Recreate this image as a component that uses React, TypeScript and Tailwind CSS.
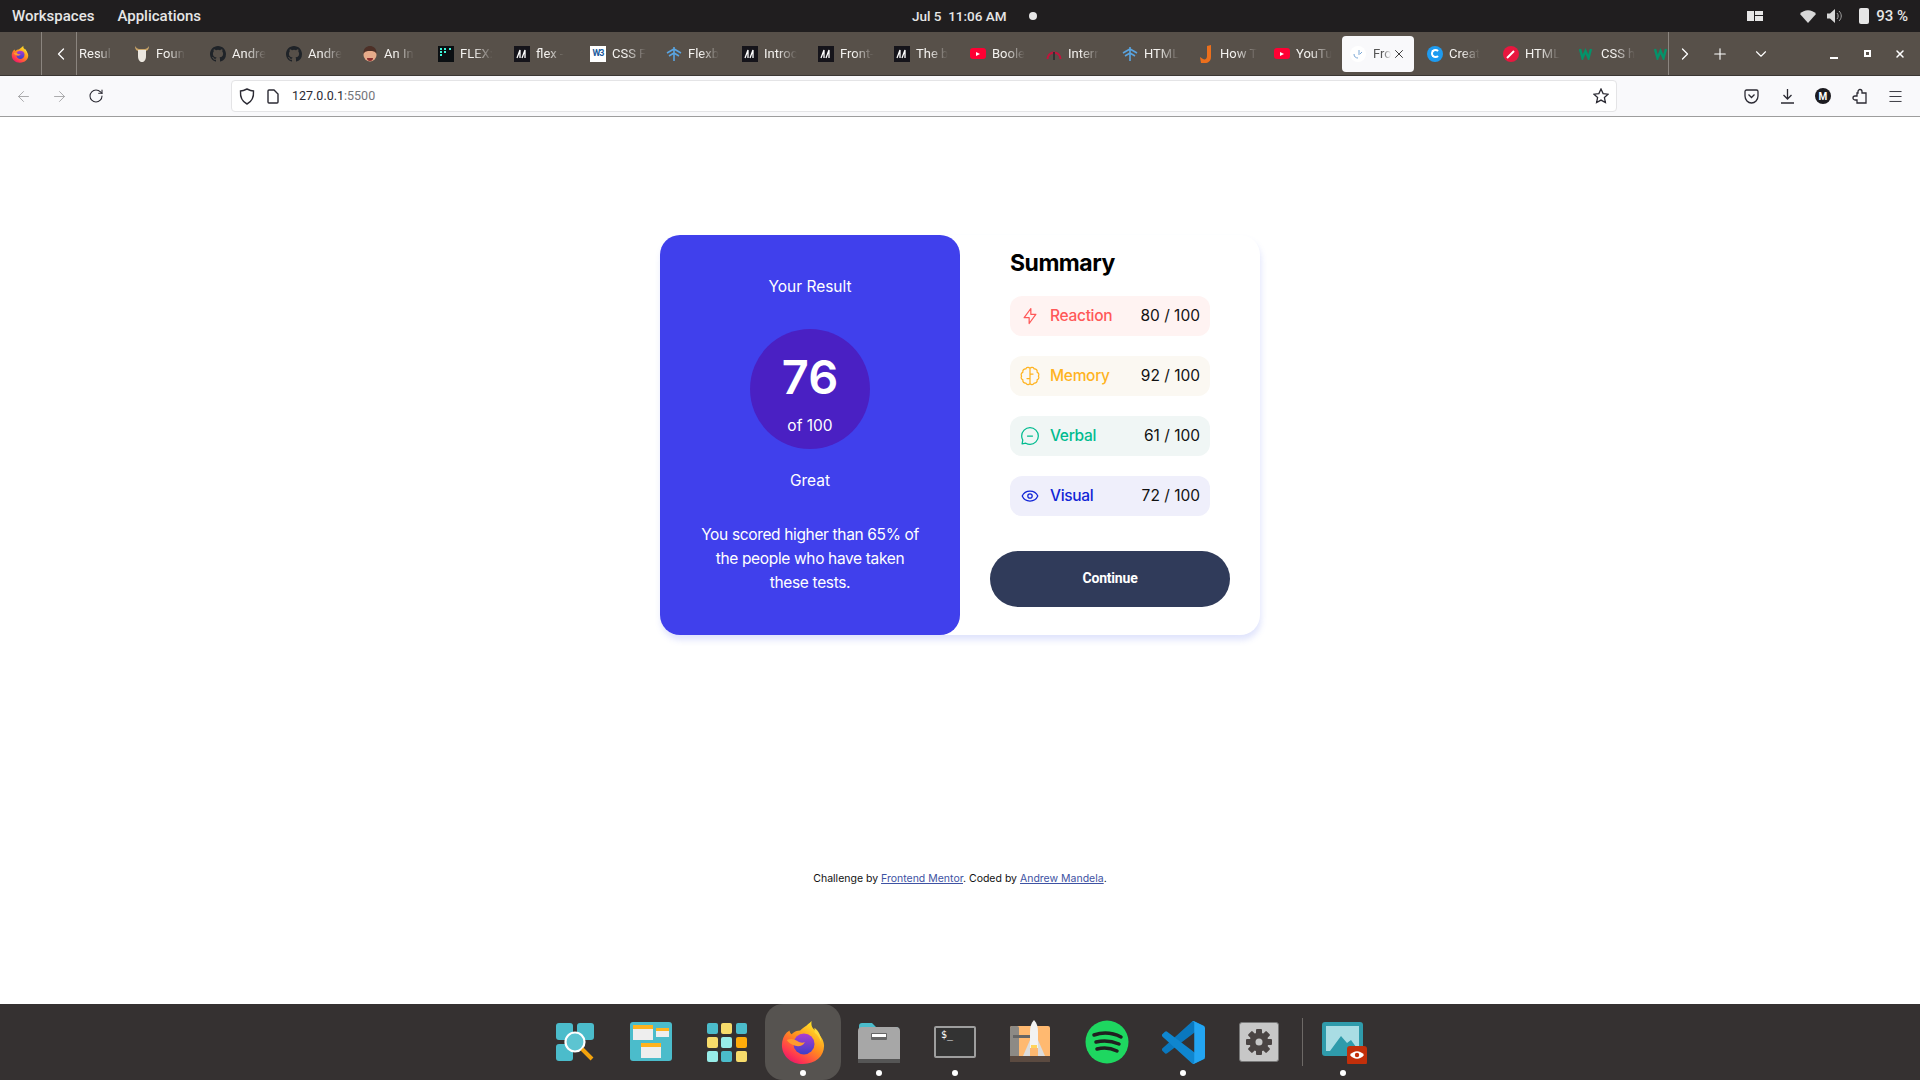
import React from "react";
import { ArrowLeft, ArrowRight, ChevronDown, ChevronLeft, ChevronRight, Menu, Plus, RotateCw, X } from "lucide-react";

function Firefox({ id, size }: { id: string; size: number }) {
  return (
    <svg width={size} height={size} viewBox="0 0 48 48">
      <defs>
        <linearGradient id={id + "a"} x1="0.8" y1="0.1" x2="0.2" y2="1">
          <stop offset="0" stopColor="#ffe226" />
          <stop offset="0.45" stopColor="#ff8a1f" />
          <stop offset="0.8" stopColor="#ff3750" />
          <stop offset="1" stopColor="#e3146f" />
        </linearGradient>
        <linearGradient id={id + "b"} x1="0.5" y1="0" x2="0.5" y2="1">
          <stop offset="0" stopColor="#b03cd0" />
          <stop offset="1" stopColor="#3b3fc8" />
        </linearGradient>
      </defs>
      <path d="M33 2c-1 5 1 8 5 11 4 4 8 9 8 15 0 11-9 19-22 19S2 38 2 27c0-5 2-10 5-13l3-2c0 2 1 3 2 4 3-3 6-4 9-4 3-3 7-5 12-10Z" fill={"url(#" + id + "a)"} />
      <circle cx="25" cy="26" r="11" fill={"url(#" + id + "b)"} />
      <path d="M7 22c4-2 8-1 11 1 3 2 6 2 8 1-2 4-6 5-10 4-4-1-7-3-9-6Z" fill="#ff9a2e" />
      <path d="M36 9c4 3 7 8 7 15-2-5-4-8-7-10Z" fill="#ffd93a" />
    </svg>
  );
}

function Mdn() {
  return (
    <span className="flex h-4 w-4 items-center justify-center bg-[#15141a]">
      <svg width="12" height="10" viewBox="0 0 12 10"><path d="M1 9 4 1v8M6 9l3-8v8" stroke="#fff" strokeWidth="1.3" fill="none" /></svg>
    </span>
  );
}

function Github() {
  return (
    <svg width="16" height="16" viewBox="0 0 16 16" fill="#1f2328">
      <path d="M8 0C3.58 0 0 3.58 0 8c0 3.54 2.29 6.53 5.47 7.59.4.07.55-.17.55-.38 0-.19-.01-.82-.01-1.49-2.01.37-2.53-.49-2.69-.94-.09-.23-.48-.94-.82-1.13-.28-.15-.68-.52-.01-.53.63-.01 1.08.58 1.23.82.72 1.21 1.87.87 2.33.66.07-.52.28-.87.51-1.07-1.78-.2-3.64-.89-3.64-3.95 0-.87.31-1.59.82-2.15-.08-.2-.36-1.02.08-2.12 0 0 .67-.21 2.2.82a7.4 7.4 0 0 1 4 0c1.53-1.04 2.2-.82 2.2-.82.44 1.1.16 1.92.08 2.12.51.56.82 1.27.82 2.15 0 3.07-1.87 3.75-3.65 3.95.29.25.54.73.54 1.48 0 1.07-.01 1.93-.01 2.2 0 .21.15.46.55.38A8 8 0 0 0 16 8c0-4.42-3.58-8-8-8Z" />
    </svg>
  );
}

function Flexbox() {
  return (
    <svg width="16" height="16" viewBox="0 0 16 16" stroke="#5aa4e0" strokeWidth="1.6" fill="none">
      <path d="M8 1v14M1 7l7-4 7 4M3 10l5-3 5 3" />
    </svg>
  );
}

function Youtube() {
  return (
    <span className="flex h-[11px] w-4 items-center justify-center rounded-[3px] bg-[#ff0033]">
      <span className="h-0 w-0 border-y-[2.5px] border-l-[4px] border-y-transparent border-l-white" />
    </span>
  );
}

function W3School() {
  return (
    <svg width="16" height="13" viewBox="0 0 16 13" fill="none" stroke="#04926a" strokeWidth="2.400">
      <path d="M1 2l2.500 9L6.500 4l3 7L12 2" />
    </svg>
  );
}

const favicons: Record<string, React.ReactNode> = {
  none: null,
  viking: (
    <svg width="16" height="18" viewBox="0 0 16 18">
      <path d="M1 1c0 4 2 5 4 5h6c2 0 4-1 4-5-1 2-3 3-4 3H5C4 4 2 3 1 1Z" fill="#c9a468" />
      <path d="M4 5h8v6c0 4-2 6-4 6s-4-2-4-6Z" fill="#ece7df" />
    </svg>
  ),
  github: <Github />,
  face: (
    <svg width="16" height="18" viewBox="0 0 16 18">
      <circle cx="8" cy="10" r="6.5" fill="#e6ab8a" />
      <path d="M1.5 9C1 3 5 1 8 1s7 2 6.5 8C13 6 11 6 8 6S3 6 1.5 9Z" fill="#4d3027" />
      <path d="M5 13h6c0 2-1 3-3 3s-3-1-3-3Z" fill="#8d2f2f" />
    </svg>
  ),
  flex: (
    <span className="grid h-4 w-4 grid-cols-3 content-start gap-[1px] bg-[#0b0f12] p-[2px]">
      <i className="h-[2px] w-[2px] bg-[#3df5d8]" />
      <i className="h-[2px] w-[2px] bg-[#3df5d8]" />
      <i className="h-[2px] w-[2px] bg-[#3df5d8]" />
      <i className="h-[2px] w-[2px] bg-[#3df5d8]" />
      <i className="h-[2px] w-[2px] bg-[#3df5d8]" />
      <i className="h-[2px] w-[2px]" />
      <i className="h-[2px] w-[2px] bg-[#3df5d8]" />
    </span>
  ),
  mdn: <Mdn />,
  w3: (
    <span className="flex h-4 w-4 items-center justify-center bg-white text-[9px] font-bold leading-none tracking-[-1px] text-[#205a9c]">W3</span>
  ),
  flexb: <Flexbox />,
  yt: <Youtube />,
  gauge: (
    <svg width="16" height="16" viewBox="0 0 16 16" fill="none">
      <path d="M1.5 13A6.5 6.5 0 0 1 14.5 13" stroke="#c2143c" strokeWidth="2" />
      <path d="M8 6v8" stroke="#333" strokeWidth="2" />
    </svg>
  ),
  j: (
    <svg width="14" height="20" viewBox="0 0 14 20">
      <path d="M8 2l4-1v12c0 4-3 6-6 6H2l-1-6 3 2c2 1 4 0 4-3Z" fill="#ec6f1c" />
    </svg>
  ),
  fm: (
    <span className="flex h-4 w-4 items-center justify-center rounded-full bg-white">
      <svg width="12" height="12" viewBox="0 0 12 12" fill="none">
        <path d="M7 2v5M10 4 8 6M2 6c0 3 2 4 4 4" stroke="#7aa7d6" strokeWidth="1" />
      </svg>
    </span>
  ),
  c: (
    <span className="flex h-4 w-4 items-center justify-center rounded-full bg-[#1e9bf0]">
      <span className="h-[9px] w-[9px] rounded-full border-2 border-white border-r-transparent" />
    </span>
  ),
  pick: (
    <span className="flex h-4 w-4 items-center justify-center rounded-full bg-[#e8173f]">
      <svg width="10" height="10" viewBox="0 0 10 10"><path d="M1 9 8 2" stroke="#fff" strokeWidth="2" /></svg>
    </span>
  ),
  w: <W3School />,
};

const tabsBefore = [
  { icon: "viking", title: "Foun" },
  { icon: "github", title: "Andre" },
  { icon: "github", title: "Andre" },
  { icon: "face", title: "An In" },
  { icon: "flex", title: "FLEX:" },
  { icon: "mdn", title: "flex -" },
  { icon: "w3", title: "CSS F" },
  { icon: "flexb", title: "Flexb" },
  { icon: "mdn", title: "Introc" },
  { icon: "mdn", title: "Front-" },
  { icon: "mdn", title: "The b" },
  { icon: "yt", title: "Boole" },
  { icon: "gauge", title: "Interr" },
  { icon: "flexb", title: "HTML" },
  { icon: "j", title: "How T" },
  { icon: "yt", title: "YouTu" },
];

const tabsAfter = [
  { icon: "c", title: "Creat" },
  { icon: "pick", title: "HTML" },
  { icon: "w", title: "CSS h" },
];

function Tab({ icon, title }: { icon: string; title: string }) {
  return (
    <div className="flex h-full w-[76px] shrink-0 items-center gap-[6px] pl-[7px]">
      <span className="flex w-4 shrink-0 justify-center">{favicons[icon]}</span>
      <span className="whitespace-nowrap text-[13px] text-[#f4f2ef] [mask-image:linear-gradient(to_right,black_40%,transparent)]">{title}</span>
    </div>
  );
}

function TopBar() {
  return (
    <header className="relative flex h-8 items-center bg-[#201e1f] text-[15px] font-medium text-[#e6e6e6]">
      <span className="ml-3">Workspaces</span>
      <span className="ml-[23px]">Applications</span>
      <div className="absolute left-[912px] top-0 flex h-8 items-center gap-[17px]">
        <span className="w-[100px] whitespace-nowrap text-[13.5px]">Jul 5&nbsp; 11:06 AM</span>
        <span className="h-2 w-2 rounded-full bg-[#e6e6e6]" />
      </div>
      <div className="ml-auto flex items-center pr-[12px]">
        <svg width="16" height="10" viewBox="0 0 16 10" fill="#e6e6e6"><path d="M0 0h7v10H0zM8 0h8v4H8zM8 5h8v5H8z" /></svg>
        <svg className="ml-[37px]" width="16" height="13" viewBox="0 0 16 13" fill="#d8d8d8"><path d="M8 13 0 4c4-5 12-5 16 0Z" /></svg>
        <svg className="ml-[11px]" width="16" height="14" viewBox="0 0 16 14" fill="none"><path d="M0 4.5h3L8 0v14L3 9.5H0Z" fill="#d8d8d8" /><path d="M10 4c1.5 1.5 1.5 4.5 0 6M12 2c3 3 3 7 0 10" stroke="#a5a5a5" /></svg>
        <span className="ml-[16px] h-4 w-[10px] rounded-[2px] bg-[#e6e6e6]" />
        <span className="ml-[7px]">93 %</span>
      </div>
    </header>
  );
}

function TabBar() {
  return (
    <div className="flex h-[44px] items-center border-b border-[#3a3633] bg-[#575049] text-white">
      <div className="flex h-full w-[42px] shrink-0 items-center justify-center border-r border-[#8b857f] pr-[2px]">
        <Firefox id="tabfox" size={18} />
      </div>
      <div className="flex h-full w-[35px] shrink-0 items-center justify-center border-r border-[#8b857f] pl-[3px]">
        <ChevronLeft size={20} strokeWidth={1.5} />
      </div>
      <div className="flex h-full w-[1591px] shrink-0 items-center overflow-hidden">
        <span className="ml-[2px] w-[48px] shrink-0 whitespace-nowrap text-[13px] text-[#f4f2ef] [mask-image:linear-gradient(to_right,black_40%,transparent_70%)]">Resul</span>
        {tabsBefore.map((t, i) => (
          <Tab key={i} icon={t.icon} title={t.title} />
        ))}
        <div className="ml-[-1px] flex h-[36px] w-[72px] shrink-0 items-center rounded-[4px] bg-[#f9f9fb] pl-[8px] text-[#555]">
          <span className="flex w-4 shrink-0 justify-center">{favicons.fm}</span>
          <span className="ml-[7px] w-[18px] text-[13px] [mask-image:linear-gradient(to_right,black_55%,transparent)]">Fro</span>
          <X size={14} strokeWidth={1.5} className="ml-[1px] text-[#222]" />
        </div>
        <div className="w-[6px] shrink-0" />
        {tabsAfter.map((t, i) => (
          <Tab key={i} icon={t.icon} title={t.title} />
        ))}
        <span className="ml-[6px] w-4 shrink-0">
          <W3School />
        </span>
      </div>
      <div className="flex h-full flex-1 items-center border-l border-[#8b857f]">
        <ChevronRight size={20} strokeWidth={1.5} className="ml-[6px]" />
        <Plus size={18} strokeWidth={1.5} className="ml-[16px]" />
        <ChevronDown size={18} strokeWidth={1.5} className="ml-[23px]" />
        <span className="ml-[60px] mt-2 h-[2px] w-2 bg-white" />
        <span className="ml-[26px] h-[7px] w-[7px] border-2 border-white" />
        <X size={12} strokeWidth={3} className="ml-[23px]" />
      </div>
    </div>
  );
}

function Toolbar() {
  return (
    <div className="flex h-[41px] items-center border-b border-[#9d9d9d] bg-[#f9f9fb] text-[#2b2a33]">
      <ArrowLeft size={17} strokeWidth={1.3} className="ml-[15px] text-[#a3a3a6]" />
      <ArrowRight size={17} strokeWidth={1.3} className="ml-[19px] text-[#a3a3a6]" />
      <RotateCw size={16} strokeWidth={1.6} className="ml-[20px]" />
      <div className="ml-[127px] flex h-8 w-[1386px] items-center rounded-[4px] border border-[#e4e4e6] bg-white">
        <svg className="ml-[7px]" width="16" height="17" viewBox="0 0 16 17" fill="none" stroke="#2b2a33" strokeWidth="1.4"><path d="M8 1c2 1 4 2 6.5 2C15 10 12 14 8 16 4 14 1 10 1.500 3 4 3 6 2 8 1Z" /></svg>
        <svg className="ml-[12px]" width="12" height="15" viewBox="0 0 12 15" fill="none" stroke="#2b2a33" strokeWidth="1.4"><path d="M1 2c0-.6.4-1 1-1h5l4 4v8c0 .6-.4 1-1 1H2c-.6 0-1-.4-1-1Z" /></svg>
        <span className="ml-[13px] text-[12.5px]">127.0.0.1<span className="text-[#75757a]">:5500</span></span>
        <svg className="ml-auto mr-[7px]" width="16" height="16" viewBox="0 0 16 16" fill="none" stroke="#2b2a33" strokeWidth="1.3"><path d="m8 1 2.100 4.600 5 .6-3.700 3.400 1 5L8 12.100 3.600 14.600l1-5L.9 6.200l5-.6Z" /></svg>
      </div>
      <svg className="ml-[127px]" width="15" height="15" viewBox="0 0 15 15" fill="none" stroke="#2b2a33" strokeWidth="1.3"><path d="M1 2.500C1 1.700 1.700 1 2.500 1h10c.8 0 1.500.7 1.500 1.500V7c0 4-3 7-6.500 7S1 11 1 7Z" /><path d="m4.500 5.500 3 3 3-3" /></svg>
      <svg className="ml-[21px]" width="15" height="16" viewBox="0 0 15 16" fill="none" stroke="#2b2a33" strokeWidth="1.3"><path d="M7.500 1v10M3.500 7l4 4 4-4M1 15h13" /></svg>
      <span className="ml-[20px] flex h-4 w-4 items-center justify-center rounded-full bg-[#1c1b20] text-[10px] font-bold text-white">M</span>
      <svg className="ml-[21px]" width="15" height="16" viewBox="0 0 15 16" fill="none" stroke="#2b2a33" strokeWidth="1.3"><path d="M6 3.500a2 2 0 0 1 4 0V5h4v10H5v-3H3a2 2 0 0 1 0-4h2V5h1Z" /></svg>
      <Menu size={17} strokeWidth={1.3} className="ml-[20px]" />
    </div>
  );
}

const scores = [
  {
    name: "Reaction",
    value: "80 / 100",
    row: "bg-[#fff3f2]",
    text: "text-[#ff5858]",
    icon: <path d="M10.833 8.333V2.5l-6.666 9.167h5V17.5l6.666-9.167h-5Z" />,
  },
  {
    name: "Memory",
    value: "92 / 100",
    row: "bg-[#fbf8f2]",
    text: "text-[#ffb31f]",
    icon: (
      <path d="M10 2.400C8.800 1 6.500 1.100 5.800 2.900 3.900 2.700 2.400 4.200 2.900 6.100 1.100 7 .7 8.800 1.600 10c-.9 1.200-.5 3 1.300 3.900-.5 1.900 1 3.400 2.900 3.200.7 1.800 3 1.900 4.200.5 1.200 1.400 3.500 1.300 4.200-.5 1.900.2 3.400-1.300 2.900-3.200 1.800-.9 2.200-2.700 1.300-3.900.9-1.200.5-3-1.300-3.900.5-1.900-1-3.400-2.900-3.200C13.500 1.100 11.200 1 10 2.400Zm0 0v15.200M10 8h3M10 12.500H7" />
    ),
  },
  {
    name: "Verbal",
    value: "61 / 100",
    row: "bg-[#f0f6f5]",
    text: "text-[#00bb8f]",
    icon: <path d="M7.500 10h5M10 18.333A8.333 8.333 0 1 0 1.667 10c0 1.518.406 2.942 1.115 4.167l-.699 3.750 3.750-.699A8.295 8.295 0 0 0 10 18.333Z" />,
  },
  {
    name: "Visual",
    value: "72 / 100",
    row: "bg-[#efeffb]",
    text: "text-[#1125d6]",
    icon: (
      <>
        <circle cx="10" cy="10" r="2.200" />
        <path d="M2.200 10C3.500 7 6.300 5 10 5s6.500 2 7.800 5c-1.300 3-4.100 5-7.800 5s-6.500-2-7.800-5Z" />
      </>
    ),
  },
];

function ResultCard() {
  return (
    <div className="flex w-[600px] rounded-[20px] bg-white shadow-[1px_5px_6px_rgba(100,120,240,0.2)] [font-family:Inter,sans-serif]">
      <section className="flex h-[400px] w-[300px] flex-col items-center rounded-[20px] bg-[#4040ec] pt-[40px] text-white">
        <h2 className="text-[15.500px] leading-6">Your Result</h2>
        <div className="mt-[30px] flex h-[120px] w-[120px] flex-col items-center rounded-full bg-[#4a20c3]">
          <span className="mt-[21px] text-[47px] font-semibold leading-[54px]">76</span>
          <span className="mt-[10px] text-[15.500px] leading-6">of 100</span>
        </div>
        <p className="mt-5 text-[15.500px] leading-6">Great</p>
        <p className="mt-[30px] w-[225px] text-center text-[15.500px] leading-6 tracking-[-0.35px]">You scored higher than 65% of the people who have taken these tests.</p>
      </section>
      <section className="flex w-[300px] flex-col items-center pt-3">
        <div className="w-[200px]">
          <h2 className="mb-[17px] text-[23px] font-bold leading-8 tracking-[-0.5px] text-black">Summary</h2>
          <div className="flex flex-col gap-5">
            {scores.map((s) => (
              <div key={s.name} className={"flex h-10 items-center rounded-[12px] pl-[10px] pr-[10px] " + s.row}>
                <svg className={s.text} width="20" height="20" viewBox="0 0 20 20" fill="none" stroke="currentColor" strokeWidth="1.250" strokeLinecap="round" strokeLinejoin="round">
                  {s.icon}
                </svg>
                <span className={"ml-[10px] text-[15.500px] font-medium tracking-[-0.3px] " + s.text}>{s.name}</span>
                <span className="ml-auto text-[15.500px] text-[#111]">{s.value}</span>
              </div>
            ))}
          </div>
        </div>
        <button className="mt-[35px] h-14 w-60 rounded-full bg-[#303b5a] pb-[2px] text-[14px] font-bold tracking-[-0.2px] text-white [font-family:Roboto,sans-serif]">Continue</button>
      </section>
    </div>
  );
}

function DockIcon({ children, active, dot }: { children: React.ReactNode; active?: boolean; dot?: boolean }) {
  return (
    <div className={"relative flex h-[76px] w-[76px] items-center justify-center " + (active ? "rounded-[18px] bg-[#565350]" : "")}>
      {children}
      {dot && <span className="absolute bottom-1 left-[35px] h-[6px] w-[6px] rounded-full bg-white" />}
    </div>
  );
}

function Gear() {
  const teeth = [0, 45, 90, 135];
  return (
    <svg width="28" height="28" viewBox="0 0 28 28" fill="#4a4443">
      {teeth.map((a) => (
        <rect key={a} x="11" y="1" width="6" height="26" rx="1" transform={"rotate(" + a + " 14 14)"} />
      ))}
      <circle cx="14" cy="14" r="9.500" />
      <circle cx="14" cy="14" r="3.500" fill="#c7c7c7" />
    </svg>
  );
}

function Dock() {
  const cells = ["#4bbccb", "#f7dc6b", "#4bbccb", "#f7dc6b", "#97ece8", "#ffac0a", "#97ece8", "#4bbccb", "#f7dc6b"];
  return (
    <footer className="flex h-[76px] items-center bg-[#353131] pl-[537px]">
      <DockIcon>
        <svg width="40" height="40" viewBox="0 0 40 40">
          <rect x="1" y="1" width="17" height="17" rx="3" fill="#4bbccb" />
          <rect x="22" y="1" width="17" height="17" rx="3" fill="#4bbccb" />
          <rect x="1" y="22" width="17" height="17" rx="3" fill="#4bbccb" />
          <circle cx="20" cy="20" r="9.500" fill="#5dc4d1" stroke="#fff" strokeWidth="2.200" />
          <path d="m27 27 10 10" stroke="#f4a30c" strokeWidth="4" />
        </svg>
      </DockIcon>
      <DockIcon>
        <svg width="42" height="40" viewBox="0 0 42 40">
          <rect width="42" height="39" rx="3" fill="#4bbccb" />
          <rect x="3" y="3" width="20" height="15" fill="#eee" />
          <rect x="3" y="3" width="20" height="4" fill="#ffb31f" />
          <rect x="26" y="6" width="13" height="9" fill="#eee" />
          <rect x="26" y="6" width="13" height="3" fill="#ffb31f" />
          <rect x="11" y="21" width="20" height="15" fill="#eee" />
          <rect x="11" y="21" width="20" height="4" fill="#ffb31f" />
        </svg>
      </DockIcon>
      <DockIcon>
        <div className="grid w-10 grid-cols-3 gap-[3px]">
          {cells.map((c, i) => (
            <span key={i} className="h-[11px] w-[11px] rounded-[2px]" style={{ backgroundColor: c }} />
          ))}
        </div>
      </DockIcon>
      <DockIcon active dot>
        <Firefox id="dockfox" size={46} />
      </DockIcon>
      <DockIcon dot>
        <svg width="42" height="44" viewBox="0 0 42 44">
          <path d="M1 6c0-2 1-3 3-3h10l4 4h20c2 0 3 1 3 3v6H1Z" fill="#4bbccb" />
          <rect x="0" y="7" width="42" height="36" rx="4" fill="#a7a7a7" />
          <rect y="39" width="42" height="4" fill="#555" />
          <rect x="13" y="13" width="16" height="7" rx="1" fill="#666" />
          <rect x="14" y="14" width="14" height="3" fill="#fff" />
        </svg>
      </DockIcon>
      <DockIcon dot>
        <div className="flex h-8 w-[42px] items-start rounded-[2px] border-2 border-[#9e9e9e] bg-[#333] pl-[5px] pt-[1px] text-[10px] leading-3 text-white [font-family:'DejaVu_Sans_Mono',monospace]">$_</div>
      </DockIcon>
      <DockIcon>
        <svg width="42" height="44" viewBox="0 0 42 44">
          <rect y="6" width="40" height="36" rx="2" fill="#ffb970" />
          <rect y="6" width="9" height="36" rx="2" fill="#8d8a85" />
          <rect y="36" width="40" height="6" fill="#5b4a40" />
          <rect x="3" y="15" width="20" height="3" fill="#666" />
          <path d="M24 0c3 3 4 7 4 12v16h-8V12c0-5 1-9 4-12Z" fill="#f2f2f2" />
          <path d="M20 20 13 36h7ZM28 20l7 16h-7Z" fill="#dcdcdc" />
          <rect x="21" y="25" width="6" height="3" fill="#ffd45c" />
        </svg>
      </DockIcon>
      <DockIcon>
        <svg width="44" height="44" viewBox="0 0 44 44" fill="none">
          <circle cx="22" cy="22" r="21.500" fill="#1ed760" />
          <path d="M9 15c9-3 19-2 27 2M11 22c8-2 16-1 23 2M12 29c7-2 14-1 20 2" stroke="#202020" strokeWidth="3.500" strokeLinecap="round" />
        </svg>
      </DockIcon>
      <DockIcon dot>
        <svg width="43" height="43" viewBox="0 0 100 100">
          <path d="M96.461 10.796 75.857.876a6.230 6.230 0 0 0-7.107 1.207L1.299 63.583a4.167 4.167 0 0 0 .004 6.162l5.510 5.009a4.167 4.167 0 0 0 5.320.236l81.228-61.620c2.725-2.067 6.639-.124 6.639 3.297v-.24a6.250 6.250 0 0 0-3.539-5.630Z" fill="#0a78bf" />
          <path d="M96.461 89.204 75.857 99.124a6.230 6.230 0 0 1-7.107-1.207L1.299 36.417a4.167 4.167 0 0 1 .004-6.162l5.510-5.009a4.167 4.167 0 0 1 5.320-.236l81.228 61.620c2.725 2.067 6.639.124 6.639-3.297v.24a6.250 6.250 0 0 1-3.539 5.630Z" fill="#0f86cf" />
          <path d="M75.858 99.126a6.232 6.232 0 0 1-7.108-1.210c2.306 2.307 6.250.674 6.250-2.588V4.672c0-3.262-3.944-4.895-6.250-2.589a6.232 6.232 0 0 1 7.108-1.210l20.600 9.908A6.250 6.250 0 0 1 100 16.413v67.174a6.250 6.250 0 0 1-3.541 5.633l-20.601 9.906Z" fill="#23a5f2" />
        </svg>
      </DockIcon>
      <DockIcon>
        <div className="flex h-10 w-10 items-center justify-center rounded-[3px] border border-[#777] bg-[#c7c7c7]">
          <Gear />
        </div>
      </DockIcon>
      <div className="ml-[5px] mr-[2px] h-12 w-px bg-[#6d6966]" />
      <DockIcon dot>
        <svg className="ml-1" width="46" height="44" viewBox="0 0 46 44">
          <rect y="2" width="41" height="34" rx="3" fill="#2f9bab" />
          <rect x="4" y="6" width="33" height="25" fill="#a9dde4" />
          <path d="M8 31 19 16l6 7 4-3 8 11Z" fill="#2f9bab" />
          <rect x="25" y="26" width="20" height="19" rx="3" fill="#c22f0a" />
          <path d="M28 35c4-5 10-5 14 0-4 5-10 5-14 0Z" fill="#fff" />
          <circle cx="35" cy="35" r="2.200" fill="#c22f0a" />
        </svg>
      </DockIcon>
    </footer>
  );
}

export default function App() {
  return (
    <div className="flex h-[1080px] w-[1920px] flex-col overflow-hidden bg-white [font-family:Roboto,sans-serif]">
      <TopBar />
      <TabBar />
      <Toolbar />
      <main className="flex flex-1 flex-col items-center pt-[118px]">
        <ResultCard />
        <p className="mt-[236px] text-[10.500px] leading-4 text-[#111] [font-family:Inter,sans-serif]">
          Challenge by <a className="text-[#3e52a3] underline">Frontend Mentor</a>. Coded by <a className="text-[#3e52a3] underline">Andrew Mandela</a>.
        </p>
      </main>
      <Dock />
    </div>
  );
}
